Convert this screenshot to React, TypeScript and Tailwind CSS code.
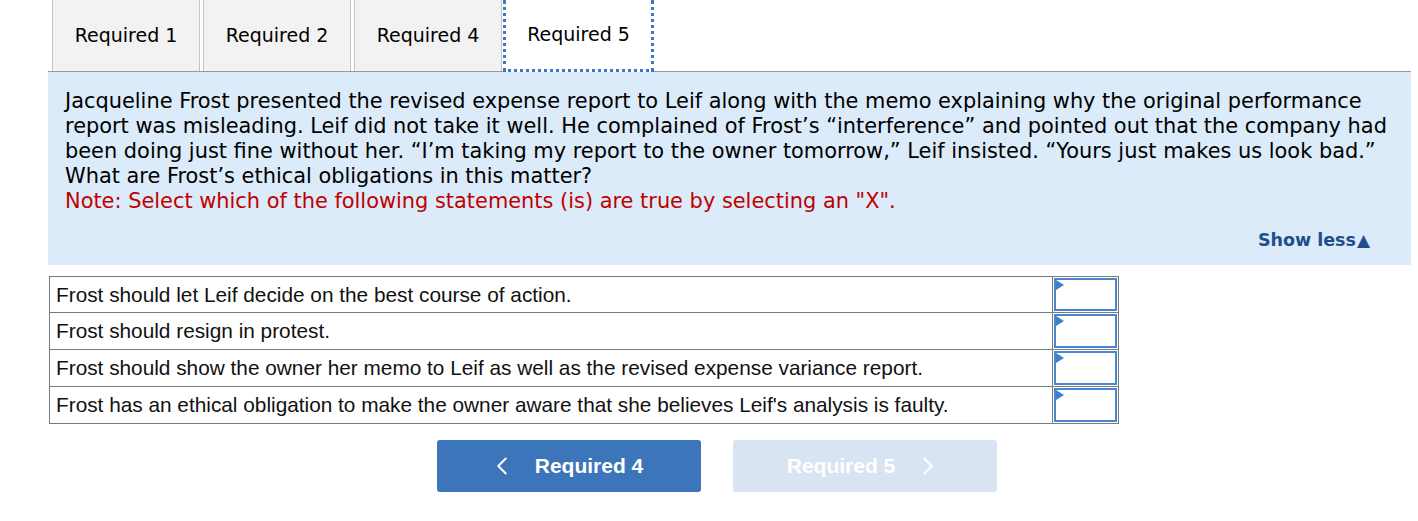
import { ChevronLeft, ChevronRight } from 'lucide-react';

const tabs = ['Required 1', 'Required 2', 'Required 4'];

const rows = [
  'Frost should let Leif decide on the best course of action.',
  'Frost should resign in protest.',
  'Frost should show the owner her memo to Leif as well as the revised expense variance report.',
  "Frost has an ethical obligation to make the owner aware that she believes Leif's analysis is faulty.",
];

const verdana = { fontFamily: '"DejaVu Sans", Verdana, sans-serif' };
const arial = { fontFamily: '"Liberation Sans", Arial, sans-serif' };

export default function App() {
  return (
    <div className="w-[1418px] h-[521px] bg-white pl-[48px] pr-[7px]">
      {/* Tabs */}
      <div className="flex h-[72px] border-b border-[#9a9a9a] pl-[4px] gap-[3px] w-[1363px]">
        {tabs.map(t => (
          <div
            key={t}
            className="w-[148px] h-full bg-[#f2f2f2] border-x border-[#c4c4c4] flex items-center justify-center text-[19px] text-black"
            style={verdana}
          >
            {t}
          </div>
        ))}
        <div
          className="w-[151px] h-[72px] -mb-px -ml-[2px] bg-white border-[3px] border-t-0 border-dotted border-[#3d77c2] flex items-center justify-center text-[19px] text-black"
          style={verdana}
        >
          Required 5
        </div>
      </div>

      {/* Question panel */}
      <div
        className="w-[1363px] h-[193px] bg-[#dbebf9] pl-[17px] pt-[17px] text-[20.9px] leading-[25px] text-black"
        style={verdana}
      >
        <p className="whitespace-nowrap">
          Jacqueline Frost presented the revised expense report to Leif along with the memo explaining why the original performance
          <br />
          report was misleading. Leif did not take it well. He complained of Frost’s “interference” and pointed out that the company had
          <br />
          been doing just fine without her. “I’m taking my report to the owner tomorrow,” Leif insisted. “Yours just makes us look bad.”
          <br />
          What are Frost’s ethical obligations in this matter?
        </p>
        <p className="whitespace-nowrap text-[#c00000]">
          Note: Select which of the following statements (is) are true by selecting an "X".
        </p>
        <div className="flex justify-end items-center pr-[41px] mt-[14px] text-[17.5px] font-bold text-[#1f4e8c]">
          <span>Show less</span>
          <span className="text-[17px] ml-[1px]">▲</span>
        </div>
      </div>

      {/* Statements table */}
      <div className="mt-[11px] w-[1070px] border border-[#7a7a7a] ml-px" style={arial}>
        {rows.map((r, i) => (
          <div key={r} className={`flex ${i > 0 ? 'h-[37px] border-t border-[#7a7a7a]' : 'h-[35px]'}`}>
            <div className="flex-1 flex items-center pl-[6px] text-[20.8px] text-[#111]">{r}</div>
            <div className="w-[66px] border-l border-[#7a7a7a] p-px">
              <div className="relative h-full w-full border-2 border-[#4a86cf] bg-white">
                <div className="absolute left-0 top-0 w-0 h-0 border-t-[5px] border-b-[5px] border-l-[8px] border-t-transparent border-b-transparent border-l-[#3f7fcc]" />
              </div>
            </div>
          </div>
        ))}
      </div>

      {/* Navigation buttons */}
      <div className="flex gap-[32px] mt-[16px] ml-[389px]" style={arial}>
        <button className="w-[264px] h-[52px] rounded-[3px] bg-[#3c75b9] text-white text-[21px] font-bold flex items-center justify-center pr-[8px]">
          <ChevronLeft className="w-[30px] h-[30px] mr-[18px]" strokeWidth={1.5} />
          Required 4
        </button>
        <button className="w-[264px] h-[52px] rounded-[3px] bg-[#d8e4f2] text-white text-[21px] font-bold flex items-center justify-center">
          Required 5
          <ChevronRight className="w-[30px] h-[30px] ml-[18px]" strokeWidth={1.5} />
        </button>
      </div>
    </div>
  );
}
